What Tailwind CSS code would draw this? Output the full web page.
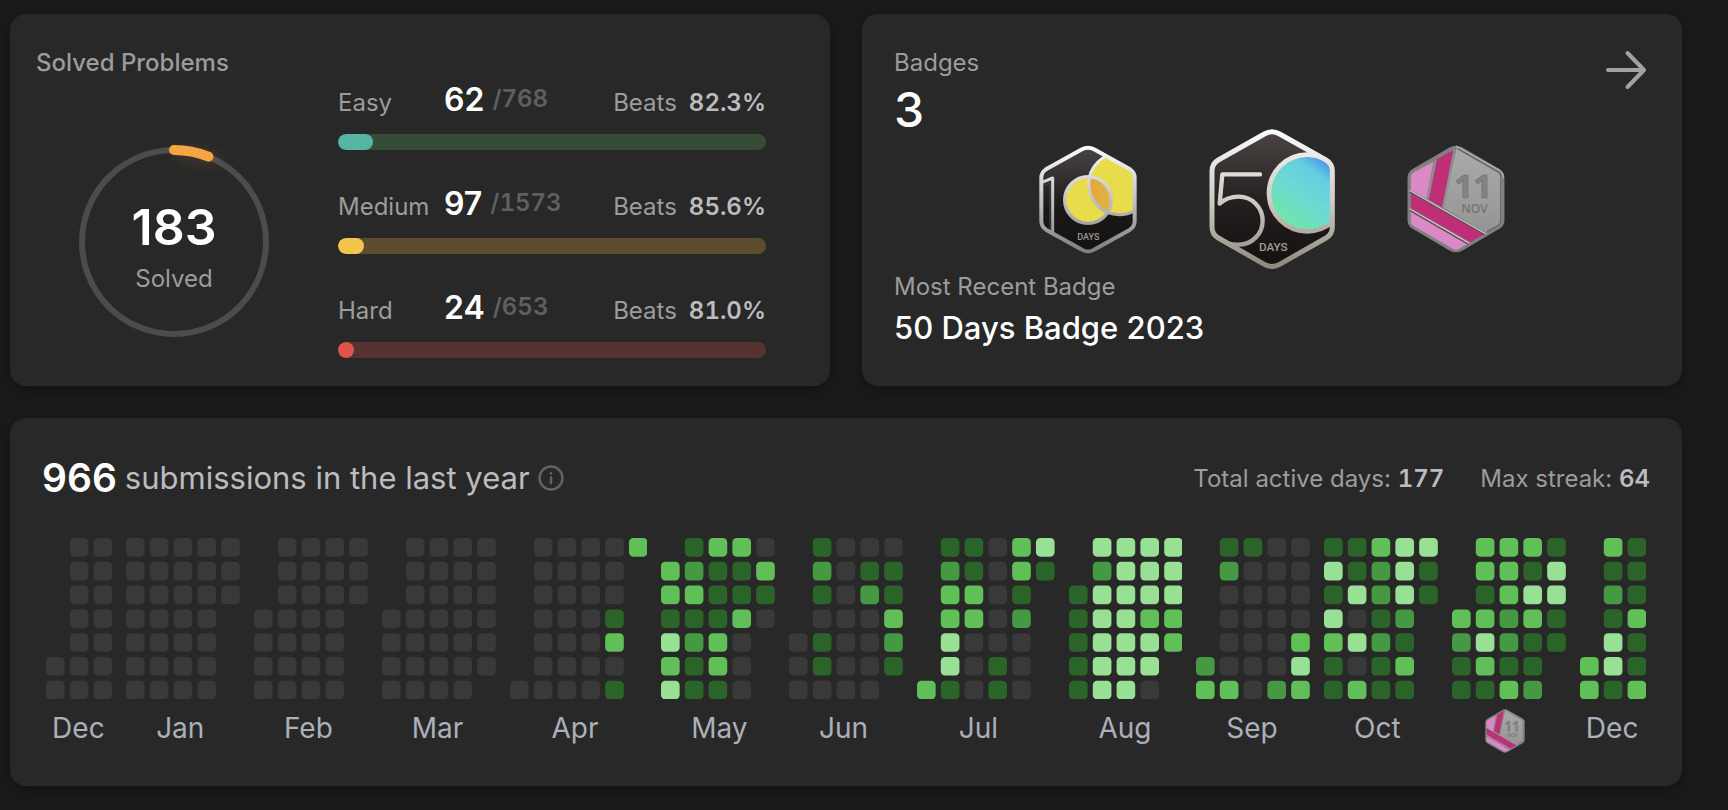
<!DOCTYPE html>
<html lang="en">
<head>
    <meta charset="UTF-8" />
    <meta name="viewport" content="width=device-width, initial-scale=1.0">
    <title>Profile - Progress</title>
    <script src="https://cdn.jsdelivr.net/npm/@tailwindcss/browser@4"></script>
</head>
<body class="bg-[#1a1a1a] min-h-screen font-[Inter,sans-serif] text-2xl text-[#9c9c9d]">
    <main class="flex flex-col gap-8 pt-[14px] pr-[46px] pb-6 pl-[10px]">
        <div class="grid grid-cols-2 gap-8">
            <!-- Solved problems -->
            <section class="flex rounded-2xl bg-[#282828] pt-8 pr-16 pb-7 pl-[26px] shadow-[0_4px_12px_rgba(0,0,0,0.3)]">
                <div class="w-[276px] shrink-0">
                    <h2 class="leading-[34px] font-medium">Solved Problems</h2>
                    <div class="mt-[62px] grid place-items-center">
                        <svg class="col-start-1 row-start-1 size-[200px]" viewBox="0 0 200 200" fill="none">
                            <defs>
                                <filter id="glow" x="-50%" y="-100%" width="200%" height="400%">
                                    <feDropShadow dx="6" dy="4" stdDeviation="7" flood-color="#f4a440" flood-opacity="0.15" />
                                </filter>
                            </defs>
                            <circle cx="100" cy="100" r="92" stroke="#4c4c4c" stroke-width="6" />
                            <path d="M100 8 A92 92 0 0 1 134.5 14.7" stroke="#f4a440" stroke-width="10" stroke-linecap="round" filter="url(#glow)" />
                        </svg>
                        <div class="col-start-1 row-start-1 flex flex-col items-center gap-3 pt-[14px]">
                            <span class="text-[50px] leading-12 font-semibold text-white">183</span>
                            <span class="leading-8">Solved</span>
                        </div>
                    </div>
                </div>

                <div id="levels" class="flex flex-1 flex-col gap-[38px] pt-[38px] pl-[26px]"></div>
            </section>

            <!-- Badges -->
            <section class="rounded-2xl bg-[#282828] px-8 pt-8 pb-[38px] shadow-[0_4px_12px_rgba(0,0,0,0.3)]">
                <div class="flex items-start justify-between">
                    <div>
                        <h2 class="leading-[34px]">Badges</h2>
                        <p class="mt-3 text-5xl leading-9 font-medium text-white">3</p>
                    </div>
                    <a href="#" aria-label="All badges">
                        <svg class="size-12" viewBox="0 0 48 48" fill="none" stroke="#a3a3a3" stroke-width="4" stroke-linecap="round" stroke-linejoin="round">
                            <path d="M6 24 H42 M25.5 7 L42 24 L25.5 41" />
                        </svg>
                    </a>
                </div>

                <div class="flex h-[142px] items-center justify-center gap-[72px]">
                    <svg class="h-[109px] w-[98px]" viewBox="57 84 294 327" role="img" aria-label="100 days">
                        <defs>
                            <linearGradient id="rim100" x1="0" y1="91" x2="0" y2="404" gradientUnits="userSpaceOnUse">
                                <stop offset="0" stop-color="#fafafa" />
                                <stop offset="0.45" stop-color="#c9c9c9" />
                                <stop offset="1" stop-color="#7e7e7e" />
                            </linearGradient>
                            <linearGradient id="dark100" x1="0" y1="0" x2="0" y2="1">
                                <stop offset="0" stop-color="#4a4646" />
                                <stop offset="0.6" stop-color="#1a1817" />
                                <stop offset="1" stop-color="#141312" />
                            </linearGradient>
                            <linearGradient id="gold" x1="0" y1="0" x2="1" y2="0">
                                <stop offset="0" stop-color="#e2a83a" />
                                <stop offset="1" stop-color="#e0c34a" />
                            </linearGradient>
                            <clipPath id="hex100">
                                <path d="M186 97 Q204 87 222 97 L330 157 Q344 166 344 182 V313 Q344 329 330 338 L222 398 Q204 409 186 398 L78 338 Q64 329 64 313 V182 Q64 166 78 157 Z" />
                            </clipPath>
                            <clipPath id="small100"><circle cx="204" cy="249" r="70" /></clipPath>
                        </defs>
                        <g clip-path="url(#hex100)">
                            <rect x="57" y="84" width="294" height="327" fill="url(#dark100)" />
                            <circle cx="204" cy="249" r="70" fill="#e8dc4b" />
                            <circle cx="298" cy="201" r="92" fill="#e8dc4b" />
                            <circle cx="298" cy="201" r="92" fill="url(#gold)" clip-path="url(#small100)" />
                            <circle cx="298" cy="201" r="92" fill="none" stroke="url(#rim100)" stroke-width="9" />
                            <circle cx="204" cy="249" r="70" fill="none" stroke="url(#rim100)" stroke-width="10" />
                            <path d="M66 196 L98 183 V350" fill="none" stroke="url(#rim100)" stroke-width="9" stroke-linejoin="round" />
                            <path d="M74 204 L90 197 V340" fill="none" stroke="#4a4848" stroke-width="3" />
                        </g>
                        <path d="M186 97 Q204 87 222 97 L330 157 Q344 166 344 182 V313 Q344 329 330 338 L222 398 Q204 409 186 398 L78 338 Q64 329 64 313 V182 Q64 166 78 157 Z" fill="none" stroke="url(#rim100)" stroke-width="12" />
                        <text x="205" y="369" text-anchor="middle" font-size="27" fill="#9a9794" class="font-[Roboto,sans-serif] font-medium">DAYS</text>
                    </svg>

                    <svg class="h-[140px] w-[126px]" viewBox="567 39 378 420" role="img" aria-label="50 days">
                        <defs>
                            <linearGradient id="rim50" x1="0" y1="47" x2="0" y2="451" gradientUnits="userSpaceOnUse">
                                <stop offset="0" stop-color="#fbfaf9" />
                                <stop offset="0.5" stop-color="#d0ccc6" />
                                <stop offset="1" stop-color="#8f8a80" />
                            </linearGradient>
                            <linearGradient id="dark50" x1="0" y1="0" x2="0" y2="1">
                                <stop offset="0" stop-color="#4c4645" />
                                <stop offset="0.55" stop-color="#221e1d" />
                                <stop offset="1" stop-color="#14100f" />
                            </linearGradient>
                            <linearGradient id="aqua" x1="0.2" y1="0.95" x2="0.85" y2="0.08">
                                <stop offset="0" stop-color="#6ee89f" />
                                <stop offset="0.4" stop-color="#6cdcd0" />
                                <stop offset="0.75" stop-color="#66cde2" />
                                <stop offset="0.9" stop-color="#4f9fe4" />
                                <stop offset="1" stop-color="#2a62d8" />
                            </linearGradient>
                            <clipPath id="hex50">
                                <path d="M733 54 Q756 41 779 54 L918 132 Q937 143 937 165 V333 Q937 355 918 366 L779 445 Q756 458 733 445 L595 366 Q576 355 576 333 V165 Q576 143 595 132 Z" />
                            </clipPath>
                        </defs>
                        <g clip-path="url(#hex50)">
                            <rect x="567" y="39" width="378" height="420" fill="url(#dark50)" />
                            <circle cx="862" cy="231" r="115" fill="url(#aqua)" />
                            <circle cx="862" cy="231" r="115" fill="none" stroke="url(#rim50)" stroke-width="14" />
                            <path d="M720 175 H607 L599 263 C615 248 635 242 656 242 A72 72 0 0 1 656 386 C634 388 614 379 600 368" fill="none" stroke="url(#rim50)" stroke-width="13" stroke-linecap="round" stroke-linejoin="round" />
                        </g>
                        <path d="M733 54 Q756 41 779 54 L918 132 Q937 143 937 165 V333 Q937 355 918 366 L779 445 Q756 458 733 445 L595 366 Q576 355 576 333 V165 Q576 143 595 132 Z" fill="none" stroke="url(#rim50)" stroke-width="15" />
                        <text x="760" y="404" text-anchor="middle" font-size="35" fill="#a39d92" class="font-[Roboto,sans-serif] font-medium">DAYS</text>
                    </svg>

                    <svg class="h-[108px] w-[98px]" viewBox="54 42 288 321" role="img" aria-label="November challenge">
                        <defs>
                            <linearGradient id="steel" x1="0" y1="0" x2="0" y2="1">
                                <stop offset="0" stop-color="#aaaaaa" />
                                <stop offset="1" stop-color="#959595" />
                            </linearGradient>
                        </defs>
                        <!-- Reused under the November column of the calendar -->
                        <g id="novBadge">
                            <path d="M180 49 Q198 39 216 49 L327 113 Q342 122 342 140 V265 Q342 283 327 291 L216 356 Q198 366 180 356 L69 291 Q54 283 54 265 V140 Q54 122 69 113 Z" fill="#808080" />
                            <path d="M200 51 L325 121 Q333 126 333 138 V265 Q333 277 325 282 L288 303 L160 228 Z" fill="url(#steel)" />
                            <path d="M204 54 L324 123 Q331 127 331 138 V265 Q331 276 324 280 L290 300" fill="none" stroke="#5c5c5c" stroke-width="3" />
                            <path d="M198 45 L327 117 Q339 124 339 140" fill="none" stroke="#b8b8b8" stroke-width="3" />
                            <path d="M64 136 Q64 129 72 124 L131 91 L110 202 L64 176 Z" fill="#db89c6" />
                            <path d="M142 84 L190 57 L157 228 L117 204 Z" fill="#bf2f77" />
                            <path d="M64 186 L279 309 L241 331 L64 230 Z" fill="#bf2f77" />
                            <path d="M64 241 L231 337 L206 351 Q198 356 190 351 L72 283 Q64 278 64 270 Z" fill="#db89c6" />
                            <path d="M137 88 L114 201 M194 57 L160 226" stroke="#8f8f8f" stroke-width="6" />
                            <path d="M60 182 L284 310 M60 236 L236 338" stroke="#6d3353" stroke-width="3" />
                            <path d="M60 177 L287 306 M60 232 L238 334" stroke="#d0d0d0" stroke-width="3" />
                            <text x="249" y="199" text-anchor="middle" font-size="98" fill="#838383" stroke="#6e6e6e" stroke-width="2" class="font-['Open_Sans',sans-serif] font-bold">11</text>
                            <text x="253" y="243" text-anchor="middle" font-size="36" fill="#747474" class="font-['Open_Sans',sans-serif] font-semibold">NOV</text>
                        </g>
                    </svg>
                </div>

                <p class="leading-[34px]">Most Recent Badge</p>
                <p class="mt-1 text-[31px] leading-10 font-medium text-white">50 Days Badge 2023</p>
            </section>
        </div>

        <!-- Submission calendar -->
        <section class="rounded-2xl bg-[#282828] px-8 pt-9 pb-[33px] shadow-[0_4px_12px_rgba(0,0,0,0.3)]">
            <div class="flex items-center justify-between">
                <h2 class="flex items-center text-[31px] leading-12 text-[#bcbcc0]">
                    <span class="mr-2 text-[39px] font-semibold text-white">966</span>
                    submissions in the last year
                    <svg class="ml-2 size-[26px]" viewBox="0 0 26 26" fill="none" stroke="#626262" stroke-width="2.5" stroke-linecap="round">
                        <circle cx="13" cy="13" r="11.5" />
                        <path d="M13 12.5 V18" />
                        <path d="M13 8.3 V8.5" />
                    </svg>
                </h2>
                <div class="flex gap-9 pt-0.5">
                    <p>Total active days: <span class="font-semibold text-[#bcbcc0] tabular-nums">177</span></p>
                    <p>Max streak: <span class="font-semibold text-[#bcbcc0] tabular-nums">64</span></p>
                </div>
            </div>

            <div id="calendar" class="mt-9 flex gap-[14px] px-1"></div>
        </section>
    </main>

    <script>
        const levels = [
            { name: 'Easy', solved: 62, total: 768, beats: '82.3%', bar: 'bg-[#54b6a5]', track: 'bg-[#364c37]' },
            { name: 'Medium', solved: 97, total: 1573, beats: '85.6%', bar: 'bg-[#f5c44b]', track: 'bg-[#5c4d2e]' },
            { name: 'Hard', solved: 24, total: 653, beats: '81.0%', bar: 'bg-[#e0544c]', track: 'bg-[#563331]' },
        ];

        document.getElementById('levels').innerHTML = levels.map(level => `
            <div>
                <div class="flex items-baseline">
                    <span class="w-[106px] leading-6">${level.name}</span>
                    <div class="flex flex-1 items-center gap-2">
                        <span class="text-[32px] leading-8 font-semibold text-white">${level.solved}</span>
                        <span class="pb-0.5 leading-6 font-semibold text-[#5f5f61] tabular-nums">/${level.total}</span>
                    </div>
                    <span class="leading-6">Beats</span>
                    <span class="ml-3 leading-6 font-semibold text-[#bcbcc0] tabular-nums">${level.beats}</span>
                </div>
                <div class="mt-[18px] h-4 overflow-hidden rounded-full ${level.track}">
                    <div class="h-full rounded-full ${level.bar}" style="width: ${(level.solved / level.total * 100).toFixed(2)}%"></div>
                </div>
            </div>
        `).join('');

        // One string per week, one character per day, '.' is a day of another month
        const months = [
            { name: 'Dec', weeks: ['.....00', '0000000', '0000000'] },
            { name: 'Jan', weeks: ['0000000', '0000000', '0000000', '0000000', '000....'] },
            { name: 'Feb', weeks: ['...0000', '0000000', '0000000', '0000000', '000....'] },
            { name: 'Mar', weeks: ['...0000', '0000000', '0000000', '0000000', '000000.'] },
            { name: 'Apr', weeks: ['......0', '0000000', '0000000', '0000000', '0001301', '3......'] },
            { name: 'May', weeks: ['.331434', '1231211', '3111331', '3113000', '0310...'] },
            { name: 'Jun', weeks: ['....000', '1210110', '0000000', '0120000', '011321.'] },
            { name: 'Jul', weeks: ['......3', '1233441', '1133000', '0000011', '3312000', '41.....'] },
            { name: 'Aug', weeks: ['..11111', '4244444', '4444444', '4443440', '44433..'] },
            { name: 'Sep', weeks: ['.....23', '1200003', '1000000', '0000002', '0000343'] },
            { name: 'Oct', weeks: ['1414311', '1140403', '3221211', '4442131', '411....'] },
            { name: 'Nov', badge: true, weeks: ['...3211', '3313431', '3332213', '3143112', '14411..'] },
            { name: 'Dec', weeks: ['.....33', '3121441', '1113113'] },
        ];
        const fills = ['fill-[#393939]', 'fill-[#2a6429]', 'fill-[#459943]', 'fill-[#60c057]', 'fill-[#98e194]'];
        const STEP = 60;
        const CELL = 47;

        document.getElementById('calendar').innerHTML = months.map(month => {
            const width = month.weeks.length * STEP - (STEP - CELL);
            const days = month.weeks.map((week, x) => [...week].map((day, y) =>
                day === '.' ? '' : `<rect x="${x * STEP}" y="${y * STEP}" width="${CELL}" height="${CELL}" rx="11" class="${fills[day]}" />`
            ).join('')).join('');
            const label = month.badge
                ? '<svg class="ml-[3px] h-11 w-10" viewBox="54 42 288 321" role="img" aria-label="November"><use href="#novBadge" /></svg>'
                : `<span class="block text-[28px] leading-[38px] text-[#abb0ba]">${month.name}</span>`;
            return `
                <div class="min-w-0 basis-0" style="flex-grow: ${width}">
                    <svg class="block w-full" viewBox="0 0 ${width} ${7 * STEP - (STEP - CELL)}">${days}</svg>
                    <div class="mx-auto mt-[10px] h-11 w-[54px]">${label}</div>
                </div>
            `;
        }).join('');
    </script>
</body>
</html>
